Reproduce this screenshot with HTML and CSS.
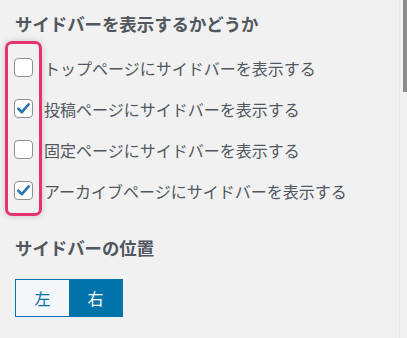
FILE: index.html
```html
<!DOCTYPE html>
<html lang="ja">
<head>
<meta charset="utf-8">
<link rel="stylesheet" href="styles.css">
</head>
<body>
<div class="panel">
  <h2 class="title">サイドバーを表示するかどうか</h2>
  <div class="options">
    <div class="highlight"></div>
    <label class="row"><span class="box"></span><span class="label">トップページにサイドバーを表示する</span></label>
    <label class="row"><span class="box checked"><svg viewBox="0 0 20 20" width="19" height="19"><path d="M4.6 10.2 L8.3 13.9 L15.4 5.6" fill="none" stroke="#2c75b3" stroke-width="2.8" stroke-linecap="round" stroke-linejoin="round"/></svg></span><span class="label">投稿ページにサイドバーを表示する</span></label>
    <label class="row"><span class="box"></span><span class="label">固定ページにサイドバーを表示する</span></label>
    <label class="row"><span class="box checked"><svg viewBox="0 0 20 20" width="19" height="19"><path d="M4.6 10.2 L8.3 13.9 L15.4 5.6" fill="none" stroke="#2c75b3" stroke-width="2.8" stroke-linecap="round" stroke-linejoin="round"/></svg></span><span class="label">アーカイブページにサイドバーを表示する</span></label>
  </div>
  <h2 class="title second">サイドバーの位置</h2>
  <div class="toggle">
    <span class="btn">左</span>
    <span class="btn active">右</span>
  </div>
</div>
<div class="track"></div>
<div class="thumb"></div>
</body>
</html>
```
FILE: styles.css
```css
html, body {
  margin: 0;
  padding: 0;
  background: #f1f1f1;
  font-family: "Noto Sans CJK JP", "Noto Sans", sans-serif;
}
.panel {
  padding: 12px 0 0 15px;
}
.title {
  margin: 0;
  font-size: 17.4px;
  line-height: 24px;
  font-weight: bold;
  color: #50575e;
}
.options {
  position: relative;
  margin: 11px 0 0 -15px;
}
.highlight {
  position: absolute;
  left: 5px;
  top: -6px;
  width: 31px;
  height: 169px;
  border: 3px solid #e6336f;
  border-radius: 7px;
  box-shadow: 0 0 6px rgba(0, 0, 0, 0.18);
}
.row {
  display: flex;
  align-items: center;
  height: 41px;
  padding-left: 14px;
}
.box {
  box-sizing: border-box;
  width: 19px;
  height: 19px;
  border: 1px solid #8c8f94;
  border-radius: 4px;
  background: #fff;
  display: flex;
  align-items: center;
  justify-content: center;
  flex: none;
}
.box svg {
  display: block;
  margin: -1px;
}
.label {
  margin-left: 11px;
  font-size: 16px;
  color: #50575e;
  line-height: 20px;
}
.second {
  margin-top: 25px;
}
.toggle {
  margin-top: 19px;
  display: flex;
  width: 108px;
  height: 38px;
  box-sizing: border-box;
  border: 1px solid #0073aa;
}
.btn {
  flex: 1;
  display: flex;
  align-items: center;
  justify-content: center;
  font-size: 16px;
  color: #0073aa;
  background: #f3f7fa;
}
.btn.active {
  background: #0073aa;
  color: #fff;
}
.track {
  position: fixed;
  top: 0;
  right: 0;
  width: 7px;
  height: 100%;
  background: #f1f1f1;
  border-left: 1px solid #e6e6e6;
}
.thumb {
  position: fixed;
  top: 0;
  right: 0;
  width: 4px;
  height: 92px;
  background: #8d8d8d;
}
```
